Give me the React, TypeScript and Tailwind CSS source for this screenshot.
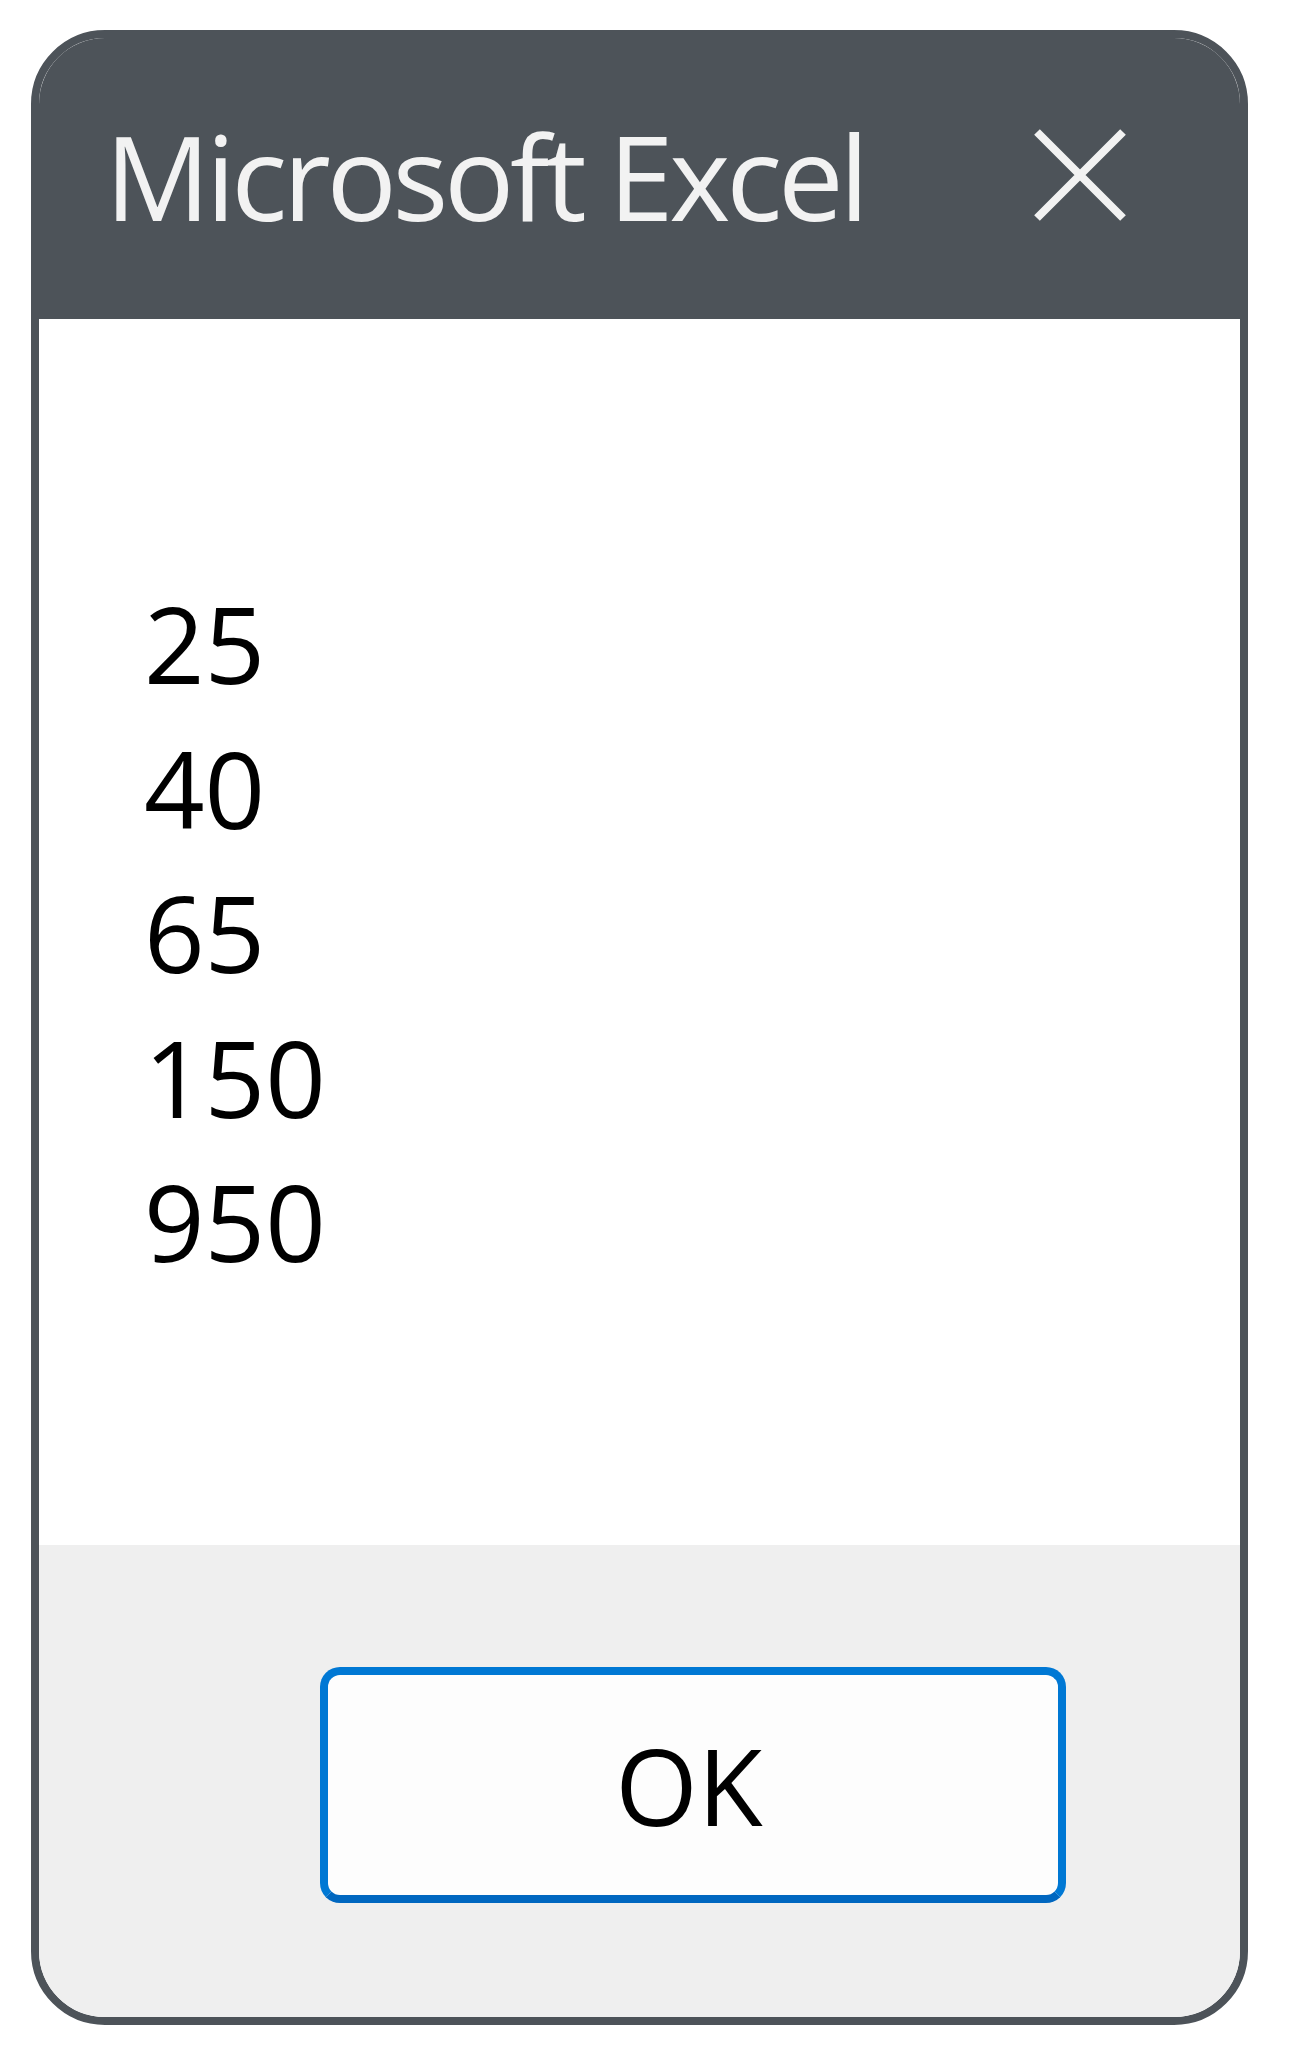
const values = [25, 40, 65, 150, 950];

function CloseIcon() {
  return (
    <svg width="92" height="92" viewBox="0 0 92 92" fill="none" aria-hidden="true">
      <path d="M3 3 L89 89 M89 3 L3 89" stroke="#f2f2f2" strokeWidth="8" />
    </svg>
  );
}

export default function App() {
  return (
    <main className="min-h-screen bg-white pt-[30px] pl-[31px]">
      <div
        className="w-[1217px] h-[1995px] rounded-[74px] border-[8px] border-[#4d5359] overflow-hidden flex flex-col"
        style={{ fontFamily: '"Open Sans", "Noto Sans", sans-serif' }}
      >
        {/* title bar */}
        <div className="h-[281px] shrink-0 bg-[#4d5359] flex items-start justify-between pl-[66px] pr-[114px]">
          <span className="mt-[79px] text-[117px] leading-none tracking-[-4.3px] text-[#f2f2f2] whitespace-nowrap">
            Microsoft Excel
          </span>
          <div className="mt-[91px]">
            <CloseIcon />
          </div>
        </div>

        {/* message */}
        <div className="flex-1 bg-white pt-[252px] pl-[105px] text-[106px] leading-[144.5px] text-black">
          {values.map((v) => (
            <div key={v}>{v}</div>
          ))}
        </div>

        {/* footer */}
        <div className="h-[472px] shrink-0 bg-[#efefef] pt-[122px] pl-[281px]">
          <button className="w-[746px] h-[236px] rounded-[20px] border-[8px] border-[#0078d4] border-b-[#0067c0] bg-[#fdfdfd] flex items-center justify-center pr-[8px] text-[106px] text-black">
            OK
          </button>
        </div>
      </div>
    </main>
  );
}
